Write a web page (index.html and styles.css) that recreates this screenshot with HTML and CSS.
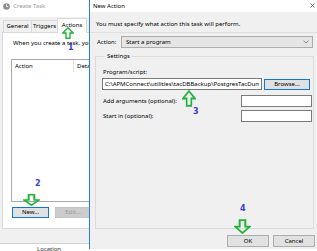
FILE: index.html
```html
<!DOCTYPE html>
<html lang="en">
<head>
  <meta charset="UTF-8">
  <title>Create Task - New Action</title>
  <link rel="stylesheet" href="styles.css">
</head>
<body>
  <!-- left window: Create Task -->
  <div class="task-col">
    <div class="task">
      <div class="task-title">
        <svg class="clock" width="7" height="7" viewBox="0 0 7 7">
          <circle cx="3.5" cy="3.5" r="3.3" fill="#8d8d8d"/>
          <path d="M3.5 1.4V3.6H5.2" stroke="#fff" stroke-width="0.9" fill="none"/>
        </svg>
        <span>Create Task</span>
      </div>
      <ul class="tabs">
        <li class="tab tab-general">General</li>
        <li class="tab tab-triggers">Triggers</li>
        <li class="tab tab-on">Actions</li>
      </ul>
      <div class="panel">
        <p class="note">When you create a task, you</p>
        <div class="list">
          <div class="list-head">
            <span class="col-action">Action</span>
            <span class="col-detail">Details</span>
          </div>
        </div>
        <div class="task-btns">
          <a class="btn btn-focus btn-new" href="javascript:void(0)">New...</a>
          <a class="btn btn-off btn-edit" href="javascript:void(0)">Edit...</a>
        </div>
      </div>
    </div>
    <div class="behind">Location</div>
  </div>

  <!-- right window: New Action -->
  <div class="dlg">
    <div class="dlg-title">
      <span>New Action</span>
      <svg class="close" width="5" height="5" viewBox="0 0 5 5">
        <path d="M0.5 0.5L4.5 4.5M4.5 0.5L0.5 4.5" stroke="#333" stroke-width="0.7"/>
      </svg>
    </div>
    <div class="dlg-head">You must specify what action this task will perform.</div>
    <div class="dlg-main">
      <div class="action-row">
        <label class="action-label">Action:</label>
        <div class="combo">
          <span>Start a program</span>
          <svg width="6" height="4" viewBox="0 0 6 4">
            <path d="M0.6 0.8L3 3L5.4 0.8" stroke="#777" stroke-width="0.8" fill="none"/>
          </svg>
        </div>
      </div>
      <fieldset class="settings">
        <legend>Settings</legend>
        <div class="field-label">Program/script:</div>
        <div class="prog-row">
          <input class="text prog" type="text" value="C:\APMConnect\utilities\tacDBBackup\PostgresTacDump.bat" readonly>
          <a class="btn btn-focus btn-browse" href="javascript:void(0)">Browse...</a>
        </div>
        <div class="opt-row opt-args">
          <span>Add arguments (optional):</span>
          <input class="text opt" type="text" value="" readonly>
        </div>
        <div class="opt-row opt-start">
          <span>Start in (optional):</span>
          <input class="text opt" type="text" value="" readonly>
        </div>
      </fieldset>
    </div>
    <div class="dlg-foot">
      <a class="btn btn-ok" href="javascript:void(0)">OK</a>
      <a class="btn btn-cancel" href="javascript:void(0)">Cancel</a>
    </div>
  </div>

  <!-- annotation marks drawn over the screenshot -->
  <svg class="mark mark-1" width="12" height="12" viewBox="0 0 12 12" preserveAspectRatio="none">
    <polygon points="6,0.8 11.2,6 8,6 8,11.2 4,11.2 4,6 0.8,6" fill="none" stroke="#22b43a" stroke-width="1.4"/>
  </svg>
  <span class="num num-1">1</span>

  <svg class="mark mark-2" width="17" height="12" viewBox="0 0 12 12" preserveAspectRatio="none">
    <polygon points="6,11.2 11.2,6 8,6 8,0.8 4,0.8 4,6 0.8,6" fill="none" stroke="#22b43a" stroke-width="1.4"/>
  </svg>
  <span class="num num-2">2</span>

  <svg class="mark mark-3" width="14" height="17" viewBox="0 0 12 12" preserveAspectRatio="none">
    <polygon points="6,0.8 11.2,6 8,6 8,11.2 4,11.2 4,6 0.8,6" fill="none" stroke="#22b43a" stroke-width="1.4"/>
  </svg>
  <span class="num num-3">3</span>

  <svg class="mark mark-4" width="17" height="15" viewBox="0 0 12 12" preserveAspectRatio="none">
    <polygon points="6,11.2 11.2,6 8,6 8,0.8 4,0.8 4,6 0.8,6" fill="none" stroke="#22b43a" stroke-width="1.4"/>
  </svg>
  <span class="num num-4">4</span>
</body>
</html>
```

FILE: styles.css
```css
body,
div,
p,
ul,
li,
fieldset,
legend {
  margin: 0;
  padding: 0;
}

ul {
  list-style-type: none;
}

a {
  color: #000;
  text-decoration: none;
  outline: none;
}

body {
  position: relative;
  width: 317px;
  height: 251px;
  overflow: hidden;
  background: #fff;
  font: 6px/10px "Noto Sans", "Liberation Sans", sans-serif;
  color: #000;
}

/* ---------- Create Task (left window) ---------- */

.task-col {
  position: absolute;
  left: 0;
  top: 0;
  width: 89px;
  overflow: hidden;
}

.task {
  width: 96px;
  height: 244px;
  background: #f0f0f0;
  border-bottom: 1px solid #d4d4d4;
  box-sizing: border-box;
  overflow: hidden;
}

.task-title {
  display: flex;
  align-items: center;
  height: 17px;
  padding: 0 0 5px 3px;
  box-sizing: border-box;
  background: #fff;
  color: #9a9a9a;
}

.task-title span {
  margin-left: 3px;
}

.tabs {
  display: flex;
  align-items: flex-end;
  height: 15px;
  padding-left: 3px;
}

.tab {
  height: 12px;
  line-height: 11px;
  text-align: center;
  border: 1px solid #d9d9d9;
  border-bottom: 0;
  box-sizing: border-box;
  background: #f0f0f0;
}

.tab + .tab {
  margin-left: -1px;
}

.tab-general {
  width: 29px;
}

.tab-triggers {
  width: 27px;
}

.tab-on {
  width: 30px;
  height: 15px;
  line-height: 13px;
  margin-bottom: -1px;
  background: #fff;
  position: relative;
}

.panel {
  height: 197px;
  margin-left: 2px;
  border: 1px solid #d9d9d9;
  box-sizing: border-box;
  background: #fff;
  overflow: hidden;
}

.note {
  margin-top: 5px;
  padding-left: 10px;
  white-space: nowrap;
}

.list {
  height: 143px;
  margin: 11px 0 0 8px;
  border: 1px solid #a9a9a9;
  box-sizing: border-box;
  overflow: hidden;
}

.list-head {
  display: flex;
  height: 12px;
  line-height: 12px;
  white-space: nowrap;
}

.col-action {
  flex: none;
  width: 62px;
  padding-left: 3px;
  border-right: 1px solid #e3e3e3;
  box-sizing: border-box;
}

.col-detail {
  padding-left: 3px;
}

.task-btns {
  display: flex;
  margin-top: 5px;
  padding-left: 9px;
}

.btn {
  display: block;
  height: 11px;
  line-height: 9px;
  text-align: center;
  border: 1px solid #adadad;
  box-sizing: border-box;
  background: #e1e1e1;
}

.btn-focus {
  border-color: #0f78d4;
}

.btn-off {
  border-color: #c4c4c4;
  background: #cccccc;
  color: #9c9c9c;
}

.btn-new {
  width: 37px;
}

.btn-edit {
  width: 36px;
  margin-left: 6px;
}

.behind {
  height: 7px;
  padding-left: 37px;
  line-height: 10px;
  color: #333;
}

/* ---------- New Action (right window) ---------- */

.dlg {
  position: absolute;
  left: 89px;
  top: 0;
  width: 228px;
  height: 249px;
  border-left: 1px solid #2a7fd4;
  box-sizing: border-box;
  background: #f0f0f0;
}

.dlg-title {
  display: flex;
  align-items: center;
  justify-content: space-between;
  height: 12px;
  padding: 0 2px 0 3px;
  background: #fff;
}

.close {
  margin-top: -1px;
}

.dlg-head {
  height: 21px;
  padding: 6px 0 0 6px;
  line-height: 12px;
  box-sizing: border-box;
  border-bottom: 1px solid #dfdfdf;
}

.dlg-main {
  padding: 0 3px 0 5px;
}

.action-row {
  display: flex;
  align-items: center;
  height: 12px;
  margin-top: 3px;
}

.action-label {
  width: 26px;
  padding-left: 2px;
  box-sizing: border-box;
}

.combo {
  flex: 1;
  display: flex;
  align-items: center;
  justify-content: space-between;
  height: 12px;
  margin-right: 1px;
  padding: 0 3px 0 4px;
  border: 1px solid #adadad;
  box-sizing: border-box;
  background: #e5e5e5;
}

.settings {
  height: 178px;
  margin-top: 3px;
  padding: 0 1px 0 6px;
  border: 1px solid #dcdcdc;
  box-sizing: border-box;
}

.settings legend {
  margin-left: 3px;
  padding: 0 2px;
  line-height: 10px;
}

.field-label {
  margin-top: 6px;
  padding-left: 1px;
}

.prog-row {
  display: flex;
  align-items: flex-start;
  margin-top: 1px;
}

.text {
  display: block;
  height: 12px;
  margin: 0;
  padding: 0 2px;
  border: 1px solid #7a7a7a;
  box-sizing: border-box;
  background: #fff;
  font: 6px/10px "Noto Sans", "Liberation Sans", sans-serif;
  color: #000;
  outline: none;
}

.prog {
  width: 160px;
}

.btn-browse {
  width: 46px;
  margin: 1px 0 0 2px;
}

.opt-row {
  display: flex;
  align-items: center;
  justify-content: space-between;
  padding-left: 1px;
}

.opt-args {
  margin-top: 5px;
}

.opt-start {
  margin-top: 3px;
}

.opt {
  width: 71px;
}

.dlg-foot {
  display: flex;
  justify-content: flex-end;
  margin-top: 6px;
  padding-right: 2px;
}

.btn-ok,
.btn-cancel {
  width: 42px;
  height: 12px;
  line-height: 10px;
}

.btn-cancel {
  margin-left: 4px;
}

/* ---------- annotation marks ---------- */

.mark {
  position: absolute;
  display: block;
}

.num {
  position: absolute;
  font: bold 8px/8px "DejaVu Sans", sans-serif;
  color: #3d3dd8;
}

.mark-1 { left: 62px; top: 27px; }
.num-1 { left: 68px; top: 44px; }

.mark-2 { left: 23px; top: 194px; }
.num-2 { left: 35px; top: 180px; }

.mark-3 { left: 182px; top: 90px; }
.num-3 { left: 193px; top: 108px; }

.mark-4 { left: 234px; top: 219px; }
.num-4 { left: 240px; top: 205px; }
```
